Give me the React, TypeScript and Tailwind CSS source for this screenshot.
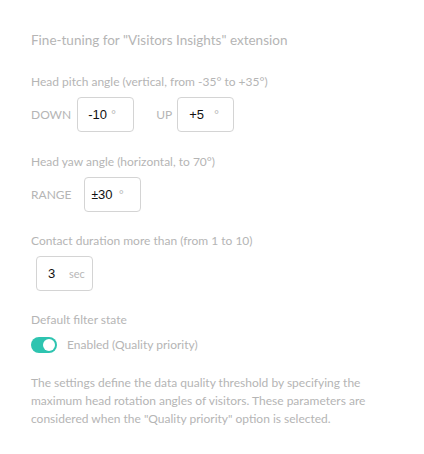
import { useState } from "react";

const lato = { fontFamily: "Lato, 'Open Sans', sans-serif" };

function NumBox({
  value,
  unit,
  prefix,
  className = "",
  valueWidth = "w-[23px]",
}: {
  value: string;
  unit: string;
  prefix?: string;
  className?: string;
  valueWidth?: string;
}) {
  return (
    <div
      className={`flex h-[35px] w-[57px] items-center rounded-[4px] border border-[#d4d4d4] bg-white ${className}`}
    >
      {prefix && <span className="font-['Liberation_Sans',Arial,sans-serif] text-[12px] text-[#111]">{prefix}</span>}
      <span className={`font-['Liberation_Sans',Arial,sans-serif] text-[13px] text-[#111] ${valueWidth}`}>{value}</span>
      <span className="text-[11px] text-[#b8b8b8]">{unit}</span>
    </div>
  );
}

export default function App() {
  const [on, setOn] = useState(true);

  return (
    <div style={lato} className="min-h-[454px] w-[424px] bg-white pl-[31px] pt-[31px] text-[12px] leading-[18px] text-[#b5b5b5]">
      <p className="text-[13.5px]">Fine-tuning for "Visitors Insights" extension</p>

      <p className="mt-[24px]">Head pitch angle (vertical, from -35° to +35°)</p>
      <div className="mt-[6px] flex items-center">
        <span>DOWN</span>
        <NumBox value="-10" unit="°" className="ml-[6px] pl-[10px]" />
        <span className="ml-[22px]">UP</span>
        <NumBox value="+5" unit="°" className="ml-[5px] pl-[11px]" valueWidth="w-[25px]" />
      </div>

      <p className="mt-[21px]">Head yaw angle (horizontal, to 70°)</p>
      <div className="mt-[6px] flex items-center">
        <span>RANGE</span>
        <NumBox prefix="±" value="30" unit="°" className="ml-[12px] pl-[7px]" valueWidth="w-[21px]" />
      </div>

      <p className="mt-[20px]">Contact duration more than (from 1 to 10)</p>
      <div className="mt-[6px] flex">
        <NumBox value="3" unit="sec" className="ml-[5px] pl-[11px]" valueWidth="w-[21px]" />
      </div>

      <p className="mt-[20px]">Default filter state</p>
      <div className="mt-[7px] flex items-center">
        <button
          onClick={() => setOn(!on)}
          className={`flex h-[16px] w-[26px] items-center rounded-full p-[2px] ${on ? "justify-end bg-[#2ec4b0]" : "justify-start bg-[#cfcfcf]"}`}
        >
          <span className="block h-[12px] w-[12px] rounded-full bg-white" />
        </button>
        <span className="ml-[10px]">Enabled (Quality priority)</span>
      </div>

      <p className="mt-[20px] w-[340px]">
        The settings define the data quality threshold by specifying the maximum head rotation angles of visitors. These
        parameters are considered when the "Quality priority" option is selected.
      </p>
    </div>
  );
}
